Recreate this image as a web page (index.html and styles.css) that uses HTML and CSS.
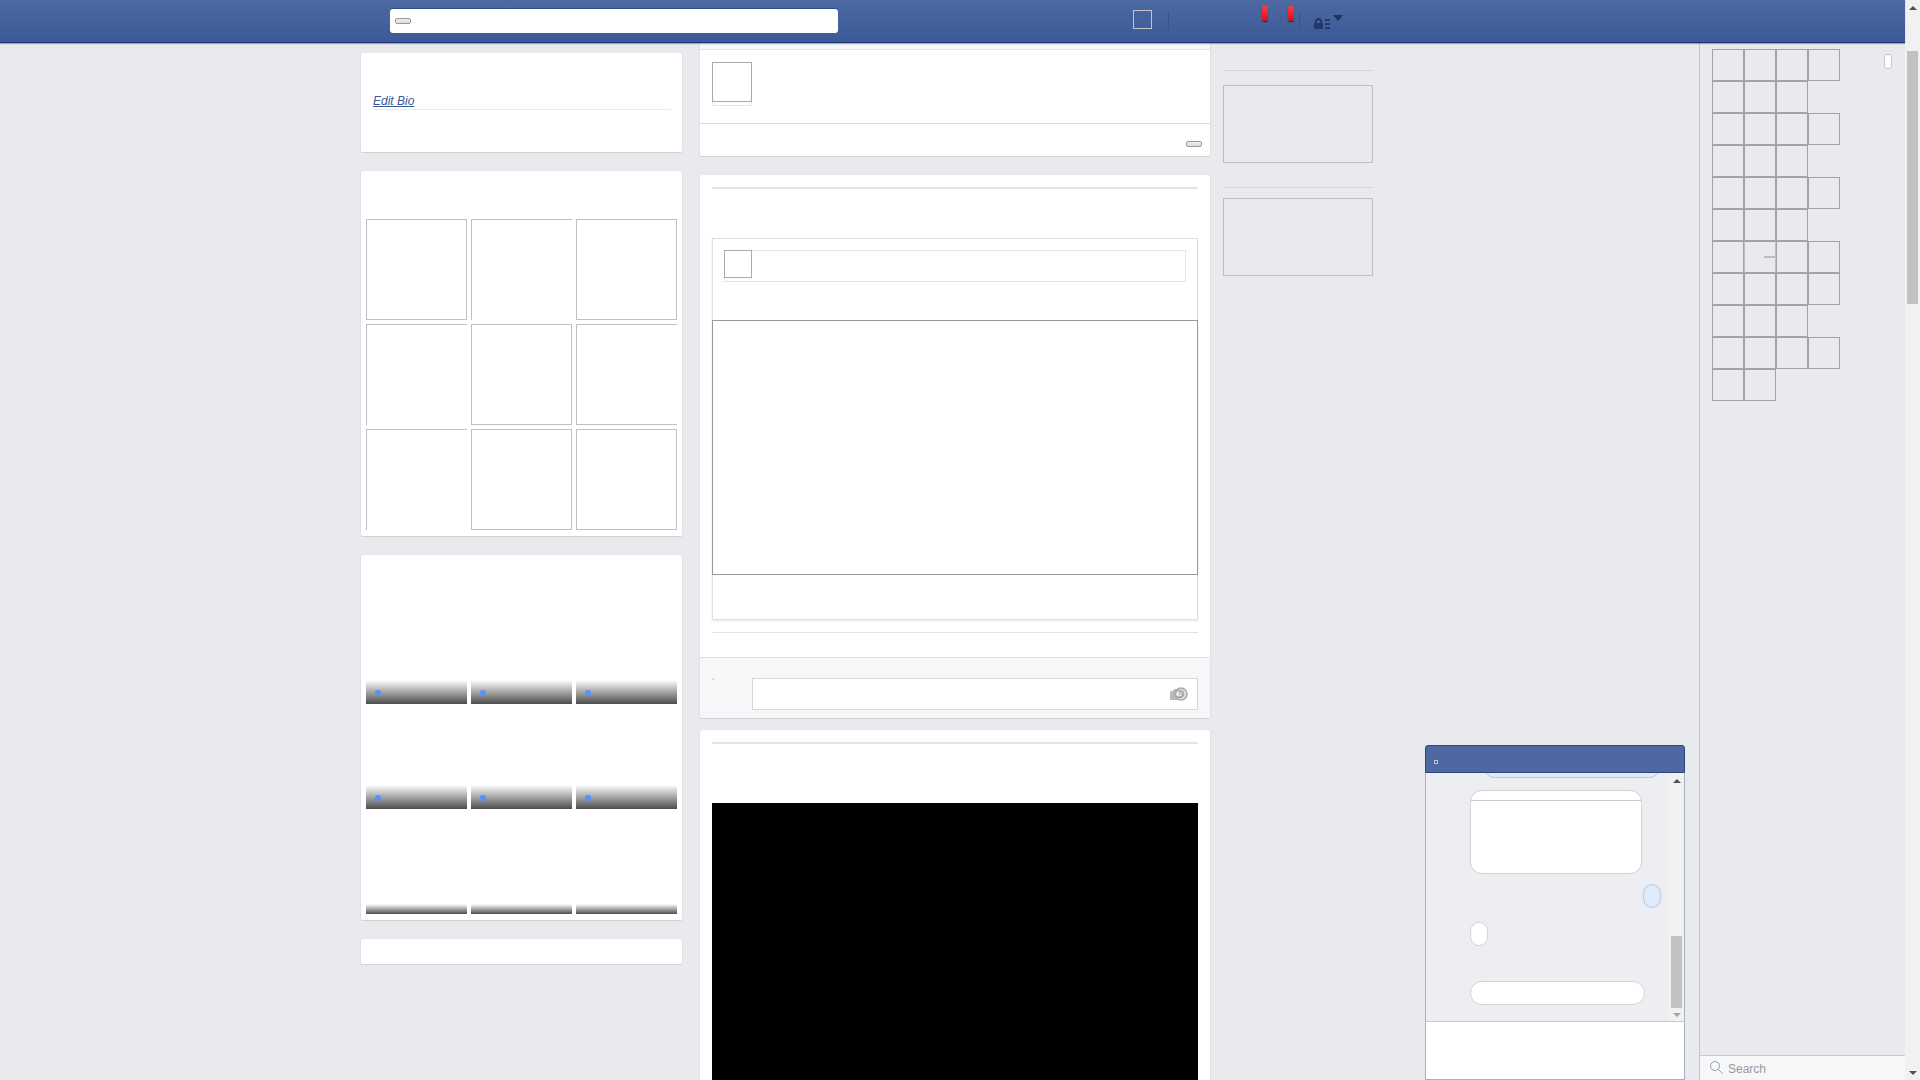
FILE: index.html
```html
<!DOCTYPE html>
<html lang="en">
<head>
<meta charset="utf-8">
<title>Profile</title>
<link rel="stylesheet" href="styles.css">
</head>
<body>
<header class="topbar">
  <form class="topsearch">
    <input class="topsearch-input" type="text" aria-label="Search">
    <button class="mini-btn topsearch-btn" type="button" aria-label="Go"></button>
  </form>
  <nav class="topnav">
    <a class="me" href="#" aria-label="Profile"></a>
    <span class="divider"></span>
    <span class="badges"><span class="badge"></span><span class="badge"></span></span>
    <span class="divider"></span>
    <svg class="lock" width="18" height="13" viewBox="0 0 18 13"><path fill-rule="evenodd" d="M0 6h1V4.500a3.500 3.500 0 0 1 7 0V6h1v6H0zM3 6h3V4.500a1.500 1.500 0 0 0-3 0z" fill="#23386b"/><path d="M11 2h5v2h-5zM11 6h5v2h-5zM11 10h5v2h-5z" fill="#23386b"/></svg>
    <svg class="caret" width="10" height="6" viewBox="0 0 10 6"><path d="M0 0h10L5 6z" fill="#1f3361"/></svg>
  </nav>
</header>

<div class="frame">
  <main class="page">
    <section class="left">
      <div class="card bio"><a class="bio-link" href="#">Edit Bio</a></div>
      <div class="card tiles photos">
        <i class="photo"></i><i class="photo open-r open-b"></i><i class="photo"></i>
        <i class="photo open-r open-b"></i><i class="photo"></i><i class="photo open-r"></i>
        <i class="photo open-r open-b"></i><i class="photo"></i><i class="photo"></i>
      </div>
      <div class="card tiles">
        <div class="friend"><span class="shade"><i class="dot"></i></span></div>
        <div class="friend"><span class="shade"><i class="dot"></i></span></div>
        <div class="friend"><span class="shade"><i class="dot"></i></span></div>
        <div class="friend"><span class="shade"><i class="dot"></i></span></div>
        <div class="friend"><span class="shade"><i class="dot"></i></span></div>
        <div class="friend"><span class="shade"><i class="dot"></i></span></div>
        <div class="friend"><span class="shade short"></span></div>
        <div class="friend"><span class="shade short"></span></div>
        <div class="friend"><span class="shade short"></span></div>
      </div>
      <div class="card stub"></div>
    </section>

    <section class="feed">
      <div class="card composer">
        <div class="composer-tabs"></div>
        <div class="composer-body"><div class="composer-avatar"><i class="avatar"></i></div></div>
        <div class="composer-foot"><button class="mini-btn" type="button" aria-label="Post"></button></div>
      </div>
      <article class="card post">
        <div class="post-rule"></div>
        <div class="share">
          <div class="share-head"><i class="avatar small"></i></div>
          <div class="share-image"></div>
        </div>
        <div class="actions"></div>
        <div class="comments">
          <i class="speck"></i>
          <div class="comment-box">
            <input class="comment-input" type="text" aria-label="Comment">
            <svg class="camera" width="18" height="14" viewBox="0 0 18 14"><path d="M0 4h3l1-2h5v11H0z" fill="#bbb"/><circle cx="11" cy="7" r="6" fill="#ddd" stroke="#aaa" stroke-width="1.500"/><circle cx="9" cy="7" r="3.500" fill="#eee" stroke="#aaa" stroke-width="1.500"/><path d="M10 4v4M13 4v5M8 9q3 3 6-1" fill="none" stroke="#999"/></svg>
          </div>
        </div>
      </article>
      <article class="card post video-post">
        <div class="post-rule"></div>
        <div class="video"></div>
      </article>
    </section>

    <aside class="ads">
      <div class="ad"></div>
      <div class="ad second"></div>
    </aside>
  </main>

  <aside class="sidebar">
    <div class="games">
      <div class="game-row"><i></i><i></i><i></i><i></i></div>
      <div class="game-row"><i></i><i></i><i></i></div>
      <div class="game-row"><i></i><i></i><i></i><i></i></div>
      <div class="game-row"><i></i><i></i><i></i></div>
      <div class="game-row"><i></i><i></i><i></i><i></i></div>
      <div class="game-row"><i></i><i></i><i></i></div>
      <div class="game-row"><i></i><i class="faint"></i><i></i><i></i></div>
      <div class="game-row"><i></i><i></i><i></i><i></i></div>
      <div class="game-row"><i></i><i></i><i></i></div>
      <div class="game-row"><i></i><i></i><i></i><i></i></div>
      <div class="game-row"><i></i><i></i></div>
    </div>
    <span class="pill"></span>
    <div class="side-search">
      <svg width="13" height="13" viewBox="0 0 13 13" fill="none" stroke="#999da5"><circle cx="5" cy="5" r="4.500"/><path d="M8.500 8.500l4 4"/></svg>
      <input class="side-input" type="text" placeholder="Search" aria-label="Search friends">
    </div>
  </aside>

  <div class="scrollbar page-scroll">
    <i class="up"></i><i class="thumb"></i><i class="down"></i>
  </div>
</div>

<section class="chat">
  <div class="chat-head"><i class="chat-icon"></i></div>
  <div class="chat-main">
    <div class="messages">
      <div class="bubble mine cut"></div>
      <div class="bubble picture"></div>
      <div class="bubble mine tiny"></div>
      <div class="bubble tiny"></div>
      <div class="bubble wide"></div>
    </div>
    <div class="scrollbar chat-scroll"><i class="up"></i><i class="thumb"></i><i class="down"></i></div>
  </div>
  <textarea class="chat-input" aria-label="Message"></textarea>
</section>
</body>
</html>
```

FILE: styles.css
```css
*, *::before, *::after { box-sizing: border-box; }

body {
  margin: 0;
  height: 100vh;
  overflow: hidden;
  background: #e9eaee;
  font-family: "Liberation Sans", Arial, sans-serif;
  font-size: 12px;
}

input, textarea, button { font: inherit; margin: 0; }
i { display: block; flex: none; }

/* Top bar */
.topbar {
  position: fixed;
  z-index: 3;
  top: 0;
  left: 0;
  right: 15px;
  height: 43px;
  display: flex;
  justify-content: space-between;
  padding: 0 562px 0 390px;
  background: linear-gradient(#4e69a2, #3b5998);
  border-bottom: 1px solid #1f3575;
  box-shadow: 0 1px 1px rgba(0, 0, 0, .3);
}

.topsearch { position: relative; width: 448px; margin-top: 9px; }

.topsearch-input {
  display: block;
  width: 100%;
  height: 24px;
  padding: 0 26px;
  border: 0;
  border-radius: 3px;
  background: #fff;
  box-shadow: 0 -1px 0 #2e4f8d;
}

.mini-btn {
  display: block;
  width: 16px;
  height: 6px;
  padding: 0;
  border: 1px solid #999;
  border-radius: 2px;
  background: linear-gradient(#eee, #ddd);
}

.topsearch-btn { position: absolute; left: 5px; top: 9px; }

.topnav { display: flex; align-items: flex-start; width: 210px; }
.me { width: 19px; height: 19px; margin: 10px 16px 0 0; border: 1px solid #c3c5c5; }
.divider { width: 1px; height: 18px; margin-top: 12px; background: #3a5388; }
.badges { display: flex; gap: 20px; margin: 6px 5px 0 93px; }

.badge {
  width: 6px;
  height: 15px;
  border-radius: 2px;
  background: linear-gradient(#fa3c45, #dc0d17);
  box-shadow: 0 1px 1px rgba(0, 0, 0, .6);
}

.lock { margin: 17px 0 0 14px; }
.caret { margin: 15px 0 0 1px; }

/* Page frame */
.frame { display: flex; height: 100vh; }

.page {
  flex: 1;
  display: flex;
  align-items: flex-start;
  gap: 16px;
  padding-left: 360px;
}

.card {
  border: 1px solid;
  border-color: #e5e6e9 #dfe0e4 #d0d1d5;
  border-radius: 3px;
  background: #fff;
}

/* Left column */
.left { width: 323px; display: grid; gap: 17px; padding-top: 52px; }
.bio { min-height: 101px; padding: 41px 11px 0 12px; }

.bio-link {
  display: block;
  height: 16px;
  line-height: 15px;
  border-bottom: 1px solid #e9eaed;
  color: #3b5998;
  font-style: italic;
  text-decoration: underline;
}

.tiles {
  display: grid;
  grid-template-columns: repeat(3, 1fr);
  gap: 4px;
  padding: 48px 5px 6px;
}

.photo { height: 101px; border: 1px solid #bfbfbf; }
.open-r { border-right: 0; }
.open-b { border-bottom: 0; }
.friend { height: 101px; display: flex; flex-direction: column; justify-content: flex-end; }
.shade { height: 24px; padding: 10px 9px; background: linear-gradient(#fff, #4c4c4c); }
.short { height: 10px; padding: 0; }
.dot { width: 6px; height: 6px; border-radius: 50%; background: #5890ff; }
.stub { height: 27px; }

/* Feed */
.feed { width: 512px; padding-top: 30px; }
.composer { margin-bottom: 17px; }
.composer-tabs { height: 19px; background: #f6f7f9; border-bottom: 1px solid #e5e5e5; }
.composer-body { height: 74px; padding: 12px; border-bottom: 1px solid #dcdcdf; }
.composer-avatar { width: 40px; height: 44px; border: 1px solid #e5e5e5; border-top: 0; }
.avatar { width: 40px; height: 40px; margin-left: -1px; border: 1px solid #aaa; }
.avatar.small { width: 28px; height: 28px; margin: -1px; }
.composer-foot { height: 32px; display: flex; justify-content: flex-end; padding: 17px 8px 0; }
.post { margin-bottom: 10px; padding-top: 12px; }
.post-rule { height: 2px; margin: 0 12px; background: #e5e5e5; }

.share {
  margin: 49px 12px 0;
  padding: 11px 0 44px;
  border: 1px solid #dfe0e3;
  box-shadow: 0 1px 2px rgba(0, 0, 0, .1);
}

.share-head { height: 32px; margin: 0 11px; border: 1px solid #e5e5e5; }
.share-image { height: 255px; margin: 38px -1px 0; border: 1px solid #999; }
.actions { height: 25px; margin: 12px 12px 0; border-top: 1px solid #e1e2e5; }

.comments {
  display: flex;
  justify-content: space-between;
  padding: 20px 12px 8px;
  border-top: 1px solid #dfe0e4;
  background: #f6f7f9;
}

.speck { width: 2px; height: 2px; background: #d8d8da; }
.comment-box { position: relative; width: 446px; }
.comment-input { display: block; width: 100%; height: 32px; padding: 0 40px 0 8px; border: 1px solid #d6d7da; background: #fff; }
.camera { position: absolute; right: 10px; top: 9px; }
.video { height: 300px; margin: 59px 12px 0; background: #000; }

/* Right column */
.ads { width: 150px; margin-left: -4px; padding-top: 70px; }
.ad { border-top: 1px solid #d3d4d8; padding-top: 14px; margin-bottom: 24px; }
.ad::after { content: ""; display: block; height: 78px; border: 1px solid #bdbec2; }
.second { padding-top: 10px; }

/* Friends sidebar */
.sidebar {
  width: 206px;
  display: flex;
  flex-wrap: wrap;
  justify-content: space-between;
  align-content: space-between;
  padding-top: 49px;
  border-left: 1px solid #c5c6ca;
}

.games { margin-left: 12px; }
.game-row { display: flex; }
.game-row i { width: 32px; height: 32px; border: 1px solid #a2a2a2; }

.game-row .faint {
  display: flex;
  align-items: center;
  justify-content: flex-end;
  border-color: #a2a2a2 #bdbdbf;
}

.faint::after { content: ""; width: 11px; height: 2px; background: #bdbdbf; }
.pill { width: 8px; height: 15px; margin: 5px 13px 0 0; border: 1px solid #c8c8ca; border-radius: 3px; background: #fff; }

.side-search {
  width: 100%;
  height: 25px;
  display: flex;
  align-items: flex-start;
  gap: 5px;
  padding: 5px 10px 0;
  border-top: 1px solid #c9cbd3;
  background: #f6f7f9;
}

.side-input { width: 150px; height: 16px; padding: 0; border: 0; background: none; color: #333; }
.side-input::placeholder { color: #999; opacity: 1; }

/* Scrollbars */
.scrollbar {
  flex: none;
  width: 15px;
  display: flex;
  flex-direction: column;
  align-items: center;
  background: #f1f1f1;
}

.up, .down { width: 0; border: 4px solid transparent; }
.up { border-top: 0; border-bottom-color: #505050; }
.down { border-bottom: 0; border-top-color: #505050; margin-top: auto; }
.thumb { width: 11px; background: #c1c1c1; }
.page-scroll { padding: 6px 0 5px; }
.page-scroll .thumb { height: 253px; margin-top: 41px; }

/* Chat window */
.chat {
  position: fixed;
  z-index: 2;
  right: 235px;
  bottom: 0;
  width: 260px;
}

.chat-head {
  height: 28px;
  padding: 14px 8px 0;
  border: 1px solid #29487d;
  border-radius: 3px 3px 0 0;
  background: #4e69a2;
}

.chat-icon { width: 4px; height: 4px; border: 1px solid #c3c5c5; }

.chat-main {
  display: flex;
  height: 248px;
  border: solid #a9adc8;
  border-width: 0 1px;
  background: #edeef2;
}

.messages { flex: 1; display: flex; flex-direction: column; align-items: flex-start; padding-left: 44px; overflow: hidden; }
.bubble { flex: none; border: 1px solid #d3d4d8; border-radius: 12px; background: #fff; }
.bubble.mine { align-self: flex-end; margin-right: 8px; background: #dfebfd; border-color: #b9c7df; }
.bubble.cut { width: 178px; height: 24px; margin-top: -19px; margin-bottom: 12px; }
.picture { width: 172px; height: 84px; padding-top: 9px; }
.picture::before { content: ""; display: block; border-top: 1px solid #ccc; }
.tiny { width: 18px; height: 24px; margin-top: 14px; }
.mine.tiny { margin-top: 10px; }
.wide { width: 175px; height: 24px; margin-top: 35px; }
.chat-scroll { padding: 6px 0 4px; }
.chat-scroll .thumb { height: 72px; margin-top: auto; }
.chat-scroll .down { margin-top: 5px; border-top-color: #a3a3a3; }

.chat-input {
  display: block;
  width: 100%;
  height: 59px;
  padding: 6px;
  border: 1px solid #a9adc8;
  border-top-color: #c9cacd;
  border-radius: 0;
  background: #fff;
  resize: none;
}
```
